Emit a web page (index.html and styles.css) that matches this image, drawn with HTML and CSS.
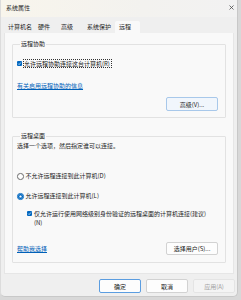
FILE: index.html
```html
<!DOCTYPE html>
<html lang="zh-CN">
<head>
  <meta charset="UTF-8">
  <meta name="viewport" content="width=device-width, initial-scale=1.0">
  <title>系统属性</title>
  <link rel="stylesheet" href="styles.css">
</head>
<body>
  <div class="dialog">
    <div class="titlebar">
      <span class="title">系统属性</span>
      <svg class="close" width="5" height="5" viewBox="0 0 10 10">
        <path d="M1 1 L9 9 M9 1 L1 9" stroke="#4a4a4a" stroke-width="1.6" fill="none"/>
      </svg>
    </div>

    <div class="tabs">
      <span class="tab">计算机名</span>
      <span class="tab">硬件</span>
      <span class="tab">高级</span>
      <span class="tab">系统保护</span>
      <span class="tab active">远程</span>
    </div>

    <div class="panel">
      <fieldset class="group assist">
        <legend>远程协助</legend>
        <label class="check-row">
          <span class="checkbox">
            <svg width="5" height="5" viewBox="0 0 10 10"><path d="M2.2 5.2 L4.2 7.2 L7.8 3" stroke="#fff" stroke-width="1.3" fill="none"/></svg>
          </span>
          <span class="focus">允许远程协助连接这台计算机(R)</span>
        </label>
        <a class="link" href="#">有关启用远程协助的信息</a>
        <div class="actions">
          <button class="btn accent">高级(V)...</button>
        </div>
      </fieldset>

      <fieldset class="group desktop">
        <legend>远程桌面</legend>
        <p class="hint">选择一个选项，然后指定谁可以连接。</p>
        <label class="radio-row first"><span class="radio"></span>不允许远程连接到此计算机(D)</label>
        <label class="radio-row"><span class="radio selected"></span>允许远程连接到此计算机(L)</label>
        <label class="check-row nested">
          <span class="checkbox">
            <svg width="5" height="5" viewBox="0 0 10 10"><path d="M2.2 5.2 L4.2 7.2 L7.8 3" stroke="#fff" stroke-width="1.3" fill="none"/></svg>
          </span>
          <span class="wrap">仅允许运行使用网络级别身份验证的远程桌面的计算机连接(建议)<br>(N)</span>
        </label>
        <div class="actions split">
          <a class="link" href="#">帮助我选择</a>
          <button class="btn wide">选择用户(S)...</button>
        </div>
      </fieldset>
    </div>

    <div class="footer">
      <button class="btn default">确定</button>
      <button class="btn">取消</button>
      <button class="btn" disabled>应用(A)</button>
    </div>
  </div>
</body>
</html>
```

FILE: styles.css
```css
body {
  margin: 0;
  background-color: #d8d8d8;
  font-family: "Noto Sans CJK SC", "Noto Sans", sans-serif;
  font-size: 6px;
  color: #1b1b1b;
}
.dialog {
  width: 238px;
  height: 297px;
  box-sizing: border-box;
  background-color: #efefef;
  border: 1px solid #c8c8c8;
  border-top: none;
  border-left-color: #dcdcdc;
  border-radius: 0 0 5px 5px;
  display: flex;
  flex-direction: column;
  overflow: hidden;
}
.titlebar {
  height: 17px;
  box-sizing: border-box;
  padding: 4px 3px 0 5px;
  display: flex;
  justify-content: space-between;
  align-items: flex-start;
  background: linear-gradient(90deg, #f8f5ec, #f3f2ef 60%, #f2f2f2);
}
.title {
  line-height: 7px;
  color: #2a2a2a;
}
.close {
  margin-top: 0.5px;
}
.tabs {
  display: flex;
  height: 12px;
  margin-top: 4px;
  padding-left: 4px;
}
.tab {
  line-height: 12px;
  padding: 0 3px;
  color: #1e1e1e;
}
.tab:nth-child(3) {
  margin-left: 5px;
}
.tab:nth-child(4) {
  margin-left: 8px;
}
.tab.active {
  margin-left: 1px;
  padding: 0 9px 0 4px;
  background-color: #f9f9f9;
  border-radius: 2px 2px 0 0;
}
.panel {
  margin: 0 3px;
  width: 230px;
  box-sizing: border-box;
  background-color: #f9f9f9;
  border: 1px solid #e6e6e6;
  border-top: none;
  padding: 7px 7px 10px 7px;
}
.group {
  margin: 0;
  min-width: 0;
  border: 1px solid #e2e2e2;
  border-radius: 1px;
}
.group legend {
  padding: 0 1px;
  margin-left: 3px;
  line-height: 8px;
}
.assist {
  padding: 11px 7px 6px 4px;
}
.desktop {
  margin-top: 14px;
  padding: 2px 7px 7px 4px;
}
.check-row,
.radio-row {
  display: flex;
  align-items: flex-start;
}
.checkbox {
  width: 5px;
  height: 5px;
  margin-top: 2px;
  margin-right: 1px;
  border-radius: 1px;
  background-color: #0067c0;
  display: flex;
}
.focus {
  border: 1px dotted #333;
  line-height: 7px;
  padding-right: 1px;
}
.link {
  display: block;
  margin-top: 14px;
  line-height: 8px;
  color: #0060b8;
  text-decoration: underline;
}
.actions {
  display: flex;
  justify-content: flex-end;
  margin-top: 7px;
}
.actions.split {
  justify-content: space-between;
  align-items: center;
  margin-top: 15px;
}
.actions.split .link {
  margin-top: 0;
}
.hint {
  margin: 0;
  line-height: 8px;
}
.radio-row {
  line-height: 8px;
  margin-top: 12px;
}
.radio-row.first {
  margin-top: 22px;
}
.radio {
  width: 4.6px;
  height: 4.6px;
  margin: 1.2px 2px 0 0;
  border: 0.7px solid #6b6b6b;
  border-radius: 50%;
  background-color: #fff;
}
.radio.selected {
  border-color: #0067c0;
  background-color: #fff;
  box-shadow: inset 0 0 0 1.4px #0067c0;
}
.nested {
  margin-top: 9px;
  margin-left: 10px;
}
.nested .checkbox {
  margin-top: 2px;
  margin-right: 2px;
}
.wrap {
  line-height: 9px;
}
.btn {
  font-family: inherit;
  font-size: 6px;
  color: #1b1b1b;
  height: 14px;
  width: 42px;
  padding: 0;
  background-color: #fdfdfd;
  border: 1px solid #d2d2d2;
  border-radius: 2px;
}
.btn.accent {
  width: 52px;
  background-color: #f1f6fc;
  border-color: #a8c8ea;
}
.btn.wide {
  width: 52px;
  height: 13px;
}
.btn.default {
  border-color: #5b9de0;
}
.btn:disabled {
  background-color: #f4f4f4;
  border-color: #e4e4e4;
  color: #a2a2a2;
}
.footer {
  display: flex;
  justify-content: flex-end;
  gap: 5px;
  margin-top: 5px;
  padding-right: 2px;
}
```
